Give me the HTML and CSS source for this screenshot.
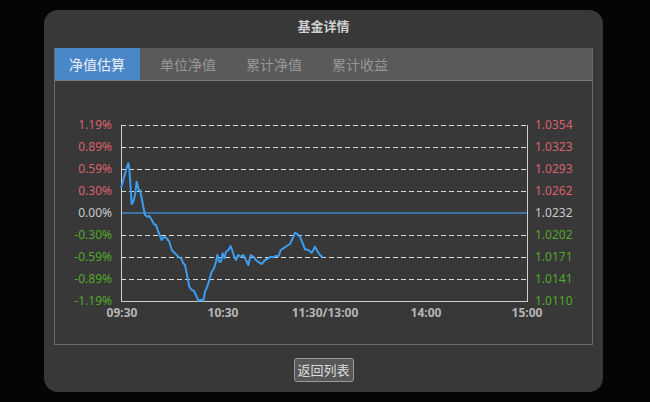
FILE: index.html
```html
<!DOCTYPE html>
<html lang="zh-CN">
<head>
<meta charset="utf-8">
<title>基金详情</title>
<link rel="stylesheet" href="styles.css">
</head>
<body>
<div class="dialog">
  <div class="dialog-title">基金详情</div>
  <div class="panel">
    <div class="tabs">
      <div class="tab active">净值估算</div>
      <div class="tab">单位净值</div>
      <div class="tab">累计净值</div>
      <div class="tab">累计收益</div>
    </div>
    <div class="chart">
      <svg class="chart-svg" width="537" height="263" viewBox="55 81 537 263">
        <g class="grid">
          <line x1="121" y1="125.5" x2="527" y2="125.5"/>
          <line x1="121" y1="147.5" x2="527" y2="147.5"/>
          <line x1="121" y1="169.5" x2="527" y2="169.5"/>
          <line x1="121" y1="191.5" x2="527" y2="191.5"/>
          <line x1="121" y1="235.5" x2="527" y2="235.5"/>
          <line x1="121" y1="257.5" x2="527" y2="257.5"/>
          <line x1="121" y1="279.5" x2="527" y2="279.5"/>
        </g>
        <g class="axis">
          <line x1="121.5" y1="125" x2="121.5" y2="302"/>
          <line x1="527.5" y1="125" x2="527.5" y2="302"/>
          <line x1="121" y1="301.5" x2="528" y2="301.5"/>
        </g>
        <line class="zero" x1="122" y1="213" x2="527" y2="213"/>
        <polyline class="series" points="121,188 123.3,180 126,170 128.3,163.3 129.3,168.3 131.7,204.3 133.3,201.7 135,195 136.7,181.7 137.7,186 138.7,190 140,190 141.7,198.3 143.3,206.7 145,215 147.3,216.7 149.3,216 151.7,220 154,224 156,225 158.3,231.7 161.7,240 164,236.7 166.7,238.3 169.3,241.7 171.7,250 175,253.3 178.3,256.7 181.7,259.3 183.3,263.3 185,265 186.7,273.3 189.3,286.7 191.7,290 194,291 196.7,296.7 198.3,300.7 200.7,300 203.3,300.7 205,291.7 207.3,286.7 209.3,280 211.7,271.7 214,268.3 216,261.7 217.3,255 219.3,261.7 221,261.7 222.7,253.3 224.3,258.3 226,251.7 228.3,250 230.7,246 232.7,251.7 234.3,256.7 236,260 238.3,255 240.7,256.7 243.3,255 246,260 248.3,265 250.7,255 253.3,256.7 256,260 259.3,262.7 261.7,264 265,260 268.3,258.3 270.7,256.7 273.3,257.3 276,256 278.7,256 280.7,250 283.3,248.3 286.7,246 290,244 292.7,238.3 295,232.7 297.3,234 300,236.7 302.7,243.3 305,249.3 308.3,250 311.7,252.7 315,246.7 317.7,251.7 320,255 323.3,257.7"/>
        <g class="ylabel left">
          <text class="up" x="112" y="129">1.19%</text>
          <text class="up" x="112" y="151">0.89%</text>
          <text class="up" x="112" y="173">0.59%</text>
          <text class="up" x="112" y="195">0.30%</text>
          <text class="flat" x="112" y="217">0.00%</text>
          <text class="down" x="112" y="239">-0.30%</text>
          <text class="down" x="112" y="261">-0.59%</text>
          <text class="down" x="112" y="283">-0.89%</text>
          <text class="down" x="112" y="305">-1.19%</text>
        </g>
        <g class="ylabel right">
          <text class="up" x="535" y="129">1.0354</text>
          <text class="up" x="535" y="151">1.0323</text>
          <text class="up" x="535" y="173">1.0293</text>
          <text class="up" x="535" y="195">1.0262</text>
          <text class="flat" x="535" y="217">1.0232</text>
          <text class="down" x="535" y="239">1.0202</text>
          <text class="down" x="535" y="261">1.0171</text>
          <text class="down" x="535" y="283">1.0141</text>
          <text class="down" x="535" y="305">1.0110</text>
        </g>
        <g class="xlabel">
          <text x="122" y="317">09:30</text>
          <text x="223" y="317">10:30</text>
          <text x="325" y="317">11:30/13:00</text>
          <text x="426" y="317">14:00</text>
          <text x="527" y="317">15:00</text>
        </g>
      </svg>
    </div>
  </div>
  <div class="actions">
    <button class="btn">返回列表</button>
  </div>
</div>
</body>
</html>
```

FILE: styles.css
```css
html, body {
  margin: 0;
  padding: 0;
  background: #050505;
  width: 650px;
  height: 402px;
  overflow: hidden;
  font-family: "Noto Sans CJK SC", "Noto Sans", sans-serif;
}

.dialog {
  margin: 10px 0 0 44px;
  width: 559px;
  height: 382px;
  background: #383838;
  border-radius: 14px;
  box-sizing: border-box;
  padding: 0 10px;
  display: flex;
  flex-direction: column;
}

.dialog-title {
  height: 38px;
  line-height: 32px;
  text-align: center;
  color: #cfcfcf;
  font-size: 13px;
  font-weight: bold;
}

.panel {
  border: 1px solid #696969;
  height: 297px;
  box-sizing: border-box;
  display: flex;
  flex-direction: column;
  background: #383838;
}

.tabs {
  display: flex;
  height: 31px;
  background: #5a5a5a;
  border-bottom: 1px solid #7b7b7b;
  margin-top: -1px;
  padding-top: 1px;
}

.tab {
  padding: 0 15px;
  line-height: 31px;
  font-size: 14px;
  color: #979797;
}

.tab.active {
  background: #4a87c9;
  color: #e9eef5;
  width: 85px;
  box-sizing: border-box;
  padding: 0 14px;
  margin-top: -1px;
  height: 32px;
  line-height: 32px;
  margin-right: 5px;
}

.chart {
  flex: 1;
}

.chart-svg {
  display: block;
}

.grid line {
  stroke: #dcdcdc;
  stroke-width: 1.2;
  stroke-dasharray: 5 3;
}

.axis line {
  stroke: #cfcfcf;
  stroke-width: 1;
}

.zero {
  stroke: #3f84c8;
  stroke-width: 1.6;
}

.series {
  fill: none;
  stroke: #3c9cf0;
  stroke-width: 2;
  stroke-linejoin: round;
}

.ylabel text {
  font-family: "Noto Sans", sans-serif;
  font-size: 12px;
}

.ylabel.left text {
  text-anchor: end;
}

.ylabel .up {
  fill: #d9626a;
}

.ylabel .flat {
  fill: #c8c8c8;
}

.ylabel .down {
  fill: #52a82a;
}

.xlabel text {
  font-family: "Noto Sans", sans-serif;
  font-size: 12px;
  font-weight: bold;
  fill: #b5b5b5;
  text-anchor: middle;
}

.actions {
  display: flex;
  justify-content: center;
  padding-top: 13px;
}

.btn {
  width: 60px;
  height: 24px;
  padding: 0;
  background: #575757;
  border: 1px solid #9a9a9a;
  border-radius: 3px;
  color: #dcdcdc;
  font-family: "Noto Sans CJK SC", sans-serif;
  font-size: 13px;
  line-height: 22px;
}
```
